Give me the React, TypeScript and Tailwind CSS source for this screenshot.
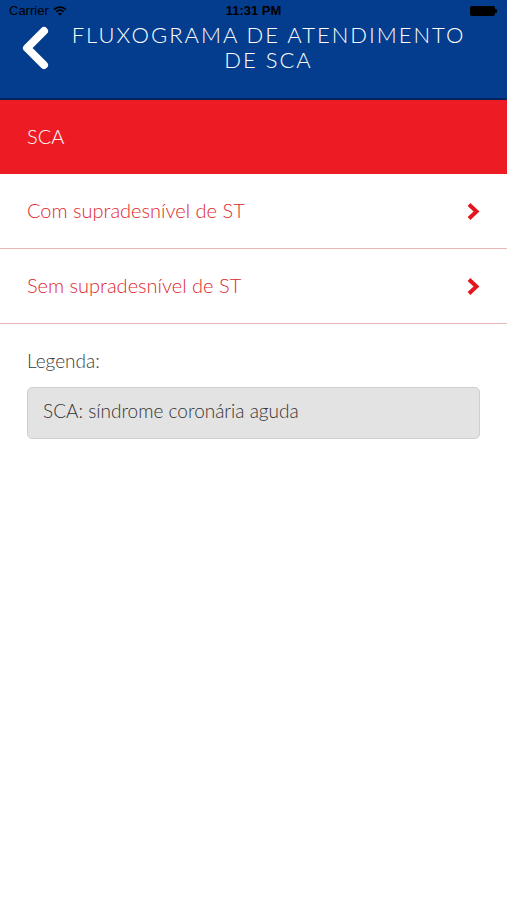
const FONT = { fontFamily: '"Lato", "Noto Sans", sans-serif' };

function StatusBar() {
  return (
    <div className="relative h-[22px] flex items-center px-[9px] text-black text-[13px]" style={{ fontFamily: '"Liberation Sans", sans-serif' }}>
      <div className="flex items-center gap-[4px]">
        <span>Carrier</span>
        <svg width="14" height="10" viewBox="0 0 14 10">
          <path d="M1 3.6 A8.5 8.5 0 0 1 13 3.6" stroke="black" strokeWidth="1.7" fill="none" />
          <path d="M3.2 5.8 A5.3 5.3 0 0 1 10.8 5.8" stroke="black" strokeWidth="1.7" fill="none" />
          <path d="M7 9.6 L5 7.7 A2.8 2.8 0 0 1 9 7.7 Z" fill="black" />
        </svg>
      </div>
      <div className="absolute left-0 right-0 text-center font-bold pointer-events-none">11:31 PM</div>
      <div className="ml-auto flex items-center mr-[1px]">
        <div className="w-[25px] h-[10px] bg-black rounded-[2px]" />
        <div className="w-[2px] h-[4px] bg-black rounded-r-[1px]" />
      </div>
    </div>
  );
}

function Chevron() {
  return (
    <svg width="14" height="19" viewBox="0 0 14 19">
      <path d="M3 2.5 L10.5 9.5 L3 16.5" stroke="#e3161f" strokeWidth="4" strokeLinejoin="miter" fill="none" />
    </svg>
  );
}

function Row({ label }: { label: string }) {
  return (
    <div className="h-[75px] flex items-center justify-between pl-[27px] pr-[27px] border-b border-[#e7b9b5] bg-white">
      <span className="text-[20px] font-light text-[#e0272e] pb-[3px]" style={FONT}>{label}</span>
      <Chevron />
    </div>
  );
}

export default function App() {
  return (
    <div className="w-[507px] h-[900px] bg-white overflow-hidden">
      <div className="bg-[#043d8e] h-[100px] border-b-2 border-[#02245a]">
        <StatusBar />
        <div className="flex items-start">
          <div className="w-[66px] flex justify-center pt-[4px] pl-[4px]">
            <svg width="32" height="44" viewBox="0 0 32 44">
              <path d="M25 5 L8 22 L25 39" stroke="white" strokeWidth="8" strokeLinecap="round" strokeLinejoin="round" fill="none" />
            </svg>
          </div>
          <div className="flex-1 pr-[36px] text-center text-white text-[22px] font-light leading-[25px] tracking-[2px]" style={FONT}>
            <div>FLUXOGRAMA DE ATENDIMENTO</div>
            <div>DE SCA</div>
          </div>
        </div>
      </div>
      <div className="bg-[#ed1c24] h-[74px] flex items-center pl-[27px]">
        <span className="text-white text-[20px] font-light pb-[3px]" style={FONT}>SCA</span>
      </div>
      <Row label="Com supradesnível de ST" />
      <Row label="Sem supradesnível de ST" />
      <div className="px-[27px] pt-[23px]">
        <div className="text-[19px] font-light text-[#3a3a3a] pb-[1px]" style={FONT}>Legenda:</div>
        <div className="mt-[10px] h-[52px] flex items-center px-[15px] pb-[2px] bg-[#e3e3e3] border border-[#cfcfcf] rounded-[5px]">
          <span className="text-[19px] font-light text-[#333]" style={FONT}>SCA: síndrome coronária aguda</span>
        </div>
      </div>
    </div>
  );
}
